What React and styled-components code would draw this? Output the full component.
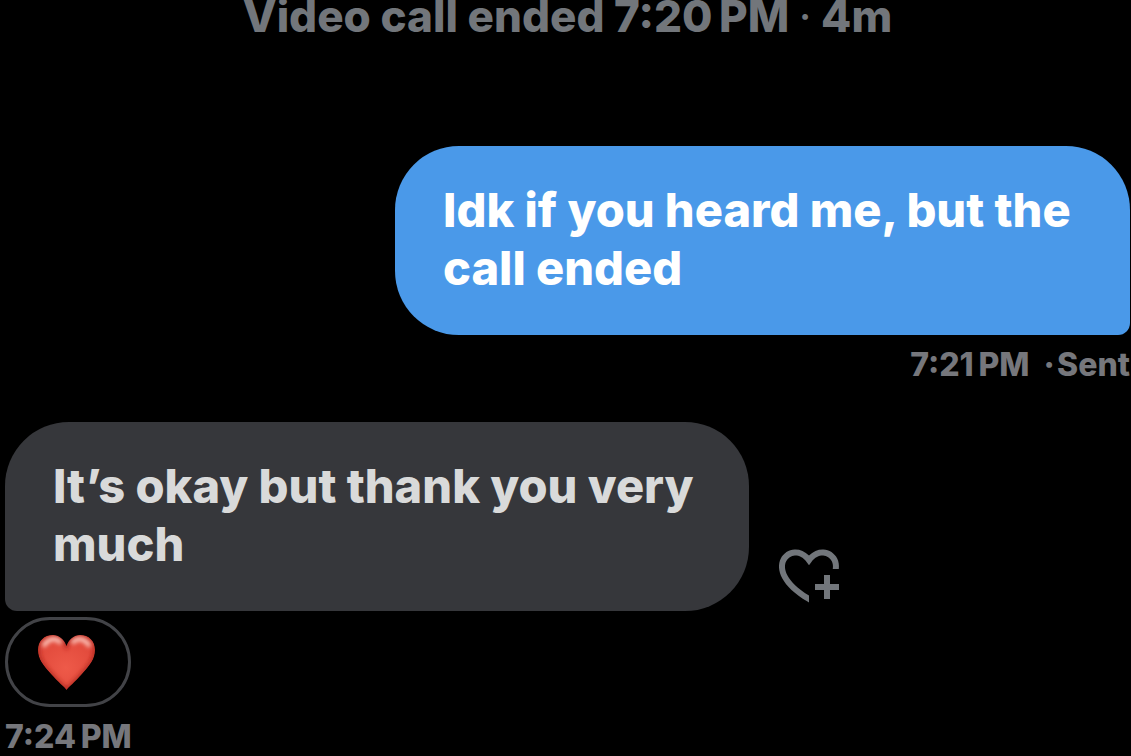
import React from 'react';
import styled, { createGlobalStyle } from 'styled-components';

const GlobalStyle = createGlobalStyle`
	*, *::before, *::after {
		box-sizing: border-box;
	}
	body {
		margin: 0;
		background: #000;
		font-family: Inter, "Liberation Sans", sans-serif;
		font-weight: 800;
	}
`;

const Conversation = styled.main`
	display: flex;
	flex-direction: column;
	padding: 0 1px 0 5px;
`;

const CallNotice = styled.p`
	margin: 0 0 114px;
	font-size: 44px;
	line-height: 32px;
	color: #72767b;
	text-align: center;
`;

const Dot = styled.span`
	font-weight: 400;
`;

const Message = styled.article`
	display: flex;
	flex-direction: column;
	align-items: ${props => props.$sent ? 'flex-end' : 'flex-start'};
	margin-bottom: ${props => props.$sent ? '37px' : '0'};
`;

const BubbleRow = styled.div`
	display: flex;
	align-items: flex-end;
	justify-content: ${props => props.$sent ? 'flex-end' : 'flex-start'};
	gap: 24px;
	width: 100%;
`;

const Bubble = styled.p`
	margin: 0;
	max-width: ${props => props.$sent ? '735px' : '744px'};
	padding: 35px 48px 38px;
	border-radius: ${props => props.$sent ? '64px 64px 12px 64px' : '64px 64px 64px 12px'};
	background: ${props => props.$sent ? '#4a99e9' : '#36373b'};
	color: ${props => props.$sent ? '#fff' : '#d9dada'};
	font-size: 47px;
	line-height: 58px;
`;

const ReactButton = styled.button`
	display: flex;
	padding: 0;
	border: none;
	background: none;
	color: #72767b;
	cursor: pointer;
`;

const Reaction = styled.button`
	display: flex;
	align-items: center;
	justify-content: center;
	width: 126px;
	height: 90px;
	margin-top: 6px;
	padding: 0 3px 0 0;
	border: 3px solid #424347;
	border-radius: 45px;
	background: #000;
	cursor: pointer;
`;

const Meta = styled.p`
	margin: 10px 0 0;
	font-size: 32px;
	line-height: 40px;
	color: #76777c;
`;

const HeartPlusIcon = () => (
	<svg width="72" height="72" viewBox="0 0 24 24" fill="currentColor" aria-hidden="true">
		<path d="M17 12v3h-2.998v2h3v3h2v-3h3v-2h-3.001v-3H17zm-5 6.839c-3.871-2.34-6.053-4.639-7.127-6.609-1.112-2.04-1.031-3.7-.479-4.82.561-1.13 1.667-1.84 2.91-1.91 1.222-.06 2.68.51 3.892 2.16l.806 1.09.805-1.09c1.211-1.65 2.668-2.22 3.89-2.16 1.242.07 2.347.78 2.908 1.91.334.677.49 1.554.321 2.59h2.011c.153-1.283-.039-2.469-.539-3.48-.887-1.79-2.647-2.91-4.601-3.01-1.65-.09-3.367.56-4.796 2.01-1.43-1.45-3.147-2.1-4.798-2.01-1.954.1-3.714 1.22-4.601 3.01-.896 1.81-.846 4.17.514 6.67 1.353 2.48 4.003 5.12 8.382 7.67l.502.299v-2.32z" />
	</svg>
);

const HEART = 'M28.5 56C26.5 53 20 48 13 40C5 31 0 25 0 16C0 7 6 1 15 1C21 1 26 5 28.5 12C31 5 36 1 42 1C51 1 57 7 57 16C57 25 52 31 44 40C37 48 30.5 53 28.5 56Z';

const RedHeart = () => (
	<svg width="57" height="56" viewBox="0 0 57 56" aria-hidden="true">
		<defs>
			<radialGradient id="heart-body" gradientUnits="userSpaceOnUse" cx="28" cy="34" r="34">
				<stop offset="0" stopColor="#ee5a49" />
				<stop offset="1" stopColor="#e0483a" />
			</radialGradient>
			<clipPath id="heart-clip">
				<path d={HEART} />
			</clipPath>
			<filter id="heart-soft" filterUnits="userSpaceOnUse" x="-10" y="-10" width="77" height="76">
				<feGaussianBlur stdDeviation="2" />
			</filter>
		</defs>
		<g clipPath="url(#heart-clip)">
			<path d={HEART} fill="url(#heart-body)" />
			<path d={HEART} fill="none" stroke="#a8241c" strokeWidth="3" filter="url(#heart-soft)" />
			<g fill="none" stroke="#ffd2c8" strokeWidth="4" strokeLinecap="round" filter="url(#heart-soft)">
				<path d="M6 11Q14 1 22 8" />
				<path d="M35 8Q43 1 51 11" />
			</g>
		</g>
	</svg>
);

const messages = [
	{ text: 'Idk if you heard me, but the call ended', meta: '7:21\u202fPM \u00a0·\u200aSent', sent: true },
	{ text: 'It’s okay but thank you very much', meta: '7:24\u202fPM', sent: false },
];

const App = () => {
	return (
		<>
			<GlobalStyle />
			<Conversation>
				<CallNotice>Video call ended 7:20{'\u202f'}PM <Dot>·</Dot> 4m</CallNotice>
				{messages.map((data, i) => (
					<Message $sent={data.sent} key={i}>
						<BubbleRow $sent={data.sent}>
							<Bubble $sent={data.sent}>{data.text}</Bubble>
							{!data.sent && (
								<ReactButton type="button" aria-label="Add reaction"><HeartPlusIcon /></ReactButton>
							)}
						</BubbleRow>
						{!data.sent && (
							<Reaction type="button" aria-label="Heart reaction"><RedHeart /></Reaction>
						)}
						<Meta>{data.meta}</Meta>
					</Message>
				))}
			</Conversation>
		</>
	);
};

export default App;
